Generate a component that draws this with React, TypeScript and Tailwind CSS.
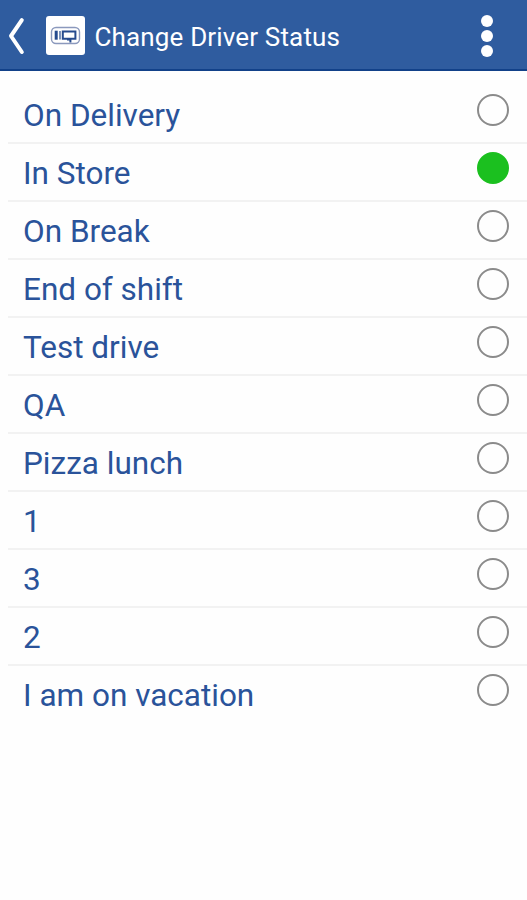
import { useState } from 'react';
import clsx from 'clsx';

const STATUSES = ['On Delivery', 'In Store', 'On Break', 'End of shift', 'Test drive', 'QA', 'Pizza lunch', '1', '3', '2', 'I am on vacation'];

export default function App() {
  const [selected, setSelected] = useState('In Store');

  return (
    <div className="min-h-[900px] w-[527px] bg-[#fefefe] font-['Roboto',sans-serif]">
      <Header />

      <ul className="pt-[15px] pl-2">
        {STATUSES.map((status) => (
          <StatusRow key={status} label={status} active={status === selected} onSelect={() => setSelected(status)} />
        ))}
      </ul>
    </div>
  );
}

function Header() {
  return (
    <header className="flex h-[71px] items-center border-b-2 border-[#124189] bg-[#2f5c9f] text-white">
      <button type="button" aria-label="Back" className="ml-[7px] h-[42px] w-5 shrink-0">
        <svg viewBox="0 0 20 42" className="h-[42px] w-5" fill="none" stroke="currentColor" strokeWidth="4" strokeLinecap="round" strokeLinejoin="round">
          <path d="M14.8 6.2 4 22 14.8 38" />
        </svg>
      </button>

      <AppLogo />

      <h1 className="ml-[9.5px] flex-1 pt-[5px] text-[26px] leading-8 tracking-[0.15px] whitespace-nowrap">Change Driver Status</h1>

      <button type="button" aria-label="More options" className="mr-[34px] flex flex-col gap-[3px] pt-[2px]">
        <span className="size-3 rounded-full bg-white" />
        <span className="size-3 rounded-full bg-white" />
        <span className="size-3 rounded-full bg-white" />
      </button>
    </header>
  );
}

function AppLogo() {
  return (
    <svg viewBox="0 0 39 39" className="mt-[2px] ml-[19px] size-[39px] shrink-0" fill="none">
      <rect width="39" height="39" rx="3" fill="#fff" />
      <rect x="5.5" y="11.5" width="28" height="16" rx="4.5" stroke="#8b99bd" strokeWidth="1.4" />
      <path d="M10.2 14.7v9" stroke="#264b8e" strokeWidth="3" />
      <path d="M14 23.6V15" stroke="#264b8e" strokeWidth="1.2" />
      <path d="M16.8 15.6h12.6v7.2H16.8z" stroke="#264b8e" strokeWidth="2" />
      <path d="M21 23.4h3.4v3.2" stroke="#264b8e" strokeWidth="2" />
    </svg>
  );
}

function StatusRow({ label, active, onSelect }: { label: string; active: boolean; onSelect: () => void }) {
  return (
    <li className="border-b-2 border-[#f2f2f2] last:border-b-transparent">
      <button type="button" role="radio" aria-checked={active} onClick={onSelect} className="flex h-14 w-full items-start justify-between pr-[18px] pl-[15px] text-left">
        <span className="pt-[10px] text-[31.5px] leading-10 font-normal text-[#2a539a]">{label}</span>
        <span className={clsx('mt-2 size-8 shrink-0 rounded-full border-2', active ? 'border-[#1bc01f] bg-[#1bc01f]' : 'border-[#8b8b8b]')} />
      </button>
    </li>
  );
}
